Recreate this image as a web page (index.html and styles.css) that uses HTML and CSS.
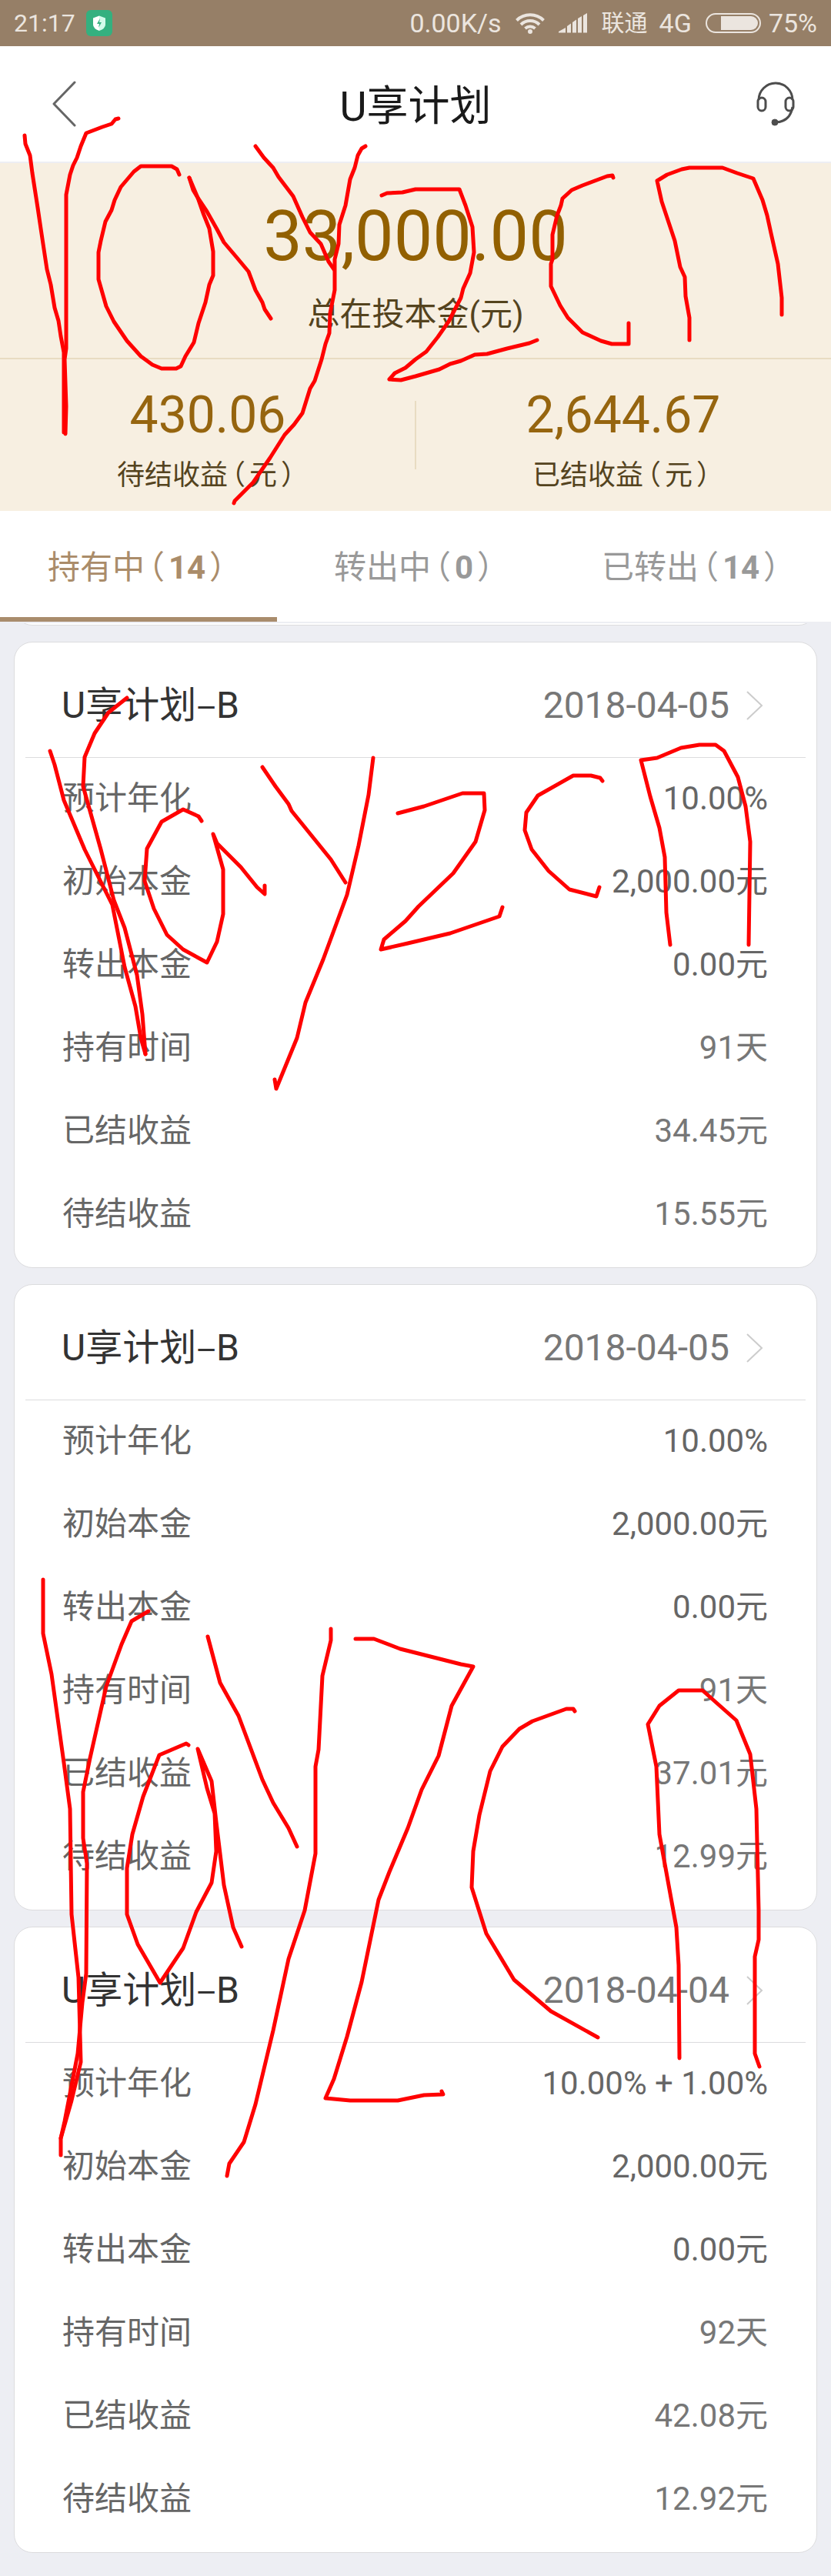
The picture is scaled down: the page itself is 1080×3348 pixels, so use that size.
FILE: index.html
```html
<!DOCTYPE html>
<html lang="zh-CN">
<head>
    <meta charset="UTF-8">
    <meta name="viewport" content="width=device-width, initial-scale=1.0">
    <title>U享计划</title>
    <link rel="stylesheet" href="styles.css">
</head>
<body>
<div class="page">

    <div class="status-bar">
        <span class="time">21:17</span>
        <svg class="guard" width="34" height="34" viewBox="0 0 34 34">
            <rect width="34" height="34" rx="6" fill="#34b07f"/>
            <path d="M17 7.500L25 10.500V19q0 5-8 8z" fill="#d3faea"/>
            <path d="M17 7.500L9 10.500V19q0 5 8 8z" fill="#fff"/>
            <path d="M18 11l-4 7h3l-1 5 4-7h-3z" fill="#34b07f"/>
        </svg>
        <span class="speed">0.00K/s</span>
        <svg class="wifi" width="38" height="28" viewBox="0 0 38 28">
            <g fill="none" stroke="#ebe5df" stroke-width="4">
                <path d="M1.500 10.500a25 25 0 0 1 35 0"/>
                <path d="M7 16a17 17 0 0 1 24 0"/>
                <path d="M12.500 21a10 10 0 0 1 13 0"/>
            </g>
            <circle cx="19" cy="25" r="3" fill="#ebe5df"/>
        </svg>
        <svg class="signal" width="38" height="26" viewBox="0 0 38 26" fill="#ebe5df">
            <path d="M0 25.500V24l9-5v6.500zM11 25.500V17l5-3.500v12zM18 25.500V12l5-3.500v17zM25 25.500V7l5-3v21.500zM32 25.500V3l5-3v25.500z"/>
        </svg>
        <span class="carrier">联通</span>
        <span class="network">4G</span>
        <svg class="battery" width="72" height="26" viewBox="0 0 72 26">
            <rect x="1" y="1" width="70" height="24" rx="12" fill="none" stroke="#ebe5df" stroke-width="2"/>
            <path d="M20 4h39a9 9 0 0 1 0 18H20z" fill="#ebe5df"/>
        </svg>
        <span>75%</span>
    </div>

    <header class="nav">
        <button class="nav-btn" aria-label="返回">
            <svg width="32" height="60" viewBox="0 0 32 60">
                <path d="M29 2L2 30l27 28" fill="none" stroke="#666" stroke-width="3" stroke-linecap="round" stroke-linejoin="round"/>
            </svg>
        </button>
        <h1>U享计划</h1>
        <button class="nav-btn" aria-label="客服">
            <svg width="50" height="58" viewBox="0 0 50 58" fill="none" stroke="#4d4d4d" stroke-width="3">
                <path d="M3 24a22 22 0 0 1 44 0"/>
                <rect x="2" y="21" width="10" height="17" rx="5"/>
                <rect x="38" y="21" width="10" height="17" rx="5"/>
                <path d="M47 33q-3 19-22 20"/>
                <circle cx="24" cy="53" r="4" fill="#4d4d4d" stroke-width="1"/>
            </svg>
        </button>
    </header>

    <section class="summary">
        <div class="total">
            <strong>33,000.00</strong>
            <p>总在投本金(元)</p>
        </div>
        <div class="profits">
            <div class="profit">
                <strong>430.06</strong>
                <p>待结收益<span class="paren">（</span>元<span class="paren">）</span></p>
            </div>
            <div class="profit">
                <strong>2,644.67</strong>
                <p>已结收益<span class="paren">（</span>元<span class="paren">）</span></p>
            </div>
        </div>
    </section>

    <nav class="tabs">
        <button class="tab active">持有中<span class="paren">（</span><b>14</b><span class="paren">）</span></button>
        <button class="tab">转出中<span class="paren">（</span><b>0</b><span class="paren">）</span></button>
        <button class="tab">已转出<span class="paren">（</span><b>14</b><span class="paren">）</span></button>
    </nav>

    <main class="list">
        <!-- bottom edge of the card scrolled under the tabs -->
        <div class="scrolled"><div class="scrolled-card"></div></div>

        <article class="card">
            <a class="card-head" href="#">
                <h2>U享计划<span class="dash">–</span>B</h2>
                <time>2018-04-05</time>
                <svg class="arrow" width="22" height="38" viewBox="0 0 22 38"><path d="M1 1l19 18L1 37"/></svg>
            </a>
            <dl>
                <div class="row"><dt>预计年化</dt><dd>10.00%</dd></div>
                <div class="row"><dt>初始本金</dt><dd>2,000.00元</dd></div>
                <div class="row"><dt>转出本金</dt><dd>0.00元</dd></div>
                <div class="row"><dt>持有时间</dt><dd class="light">91天</dd></div>
                <div class="row"><dt>已结收益</dt><dd class="light">34.45元</dd></div>
                <div class="row"><dt>待结收益</dt><dd class="light">15.55元</dd></div>
            </dl>
        </article>

        <article class="card">
            <a class="card-head" href="#">
                <h2>U享计划<span class="dash">–</span>B</h2>
                <time>2018-04-05</time>
                <svg class="arrow" width="22" height="38" viewBox="0 0 22 38"><path d="M1 1l19 18L1 37"/></svg>
            </a>
            <dl>
                <div class="row"><dt>预计年化</dt><dd>10.00%</dd></div>
                <div class="row"><dt>初始本金</dt><dd>2,000.00元</dd></div>
                <div class="row"><dt>转出本金</dt><dd>0.00元</dd></div>
                <div class="row"><dt>持有时间</dt><dd class="light">91天</dd></div>
                <div class="row"><dt>已结收益</dt><dd class="light">37.01元</dd></div>
                <div class="row"><dt>待结收益</dt><dd class="light">12.99元</dd></div>
            </dl>
        </article>

        <article class="card">
            <a class="card-head" href="#">
                <h2>U享计划<span class="dash">–</span>B</h2>
                <time>2018-04-04</time>
                <svg class="arrow" width="22" height="38" viewBox="0 0 22 38"><path d="M1 1l19 18L1 37"/></svg>
            </a>
            <dl>
                <div class="row"><dt>预计年化</dt><dd>10.00% + 1.00%</dd></div>
                <div class="row"><dt>初始本金</dt><dd>2,000.00元</dd></div>
                <div class="row"><dt>转出本金</dt><dd>0.00元</dd></div>
                <div class="row"><dt>持有时间</dt><dd class="light">92天</dd></div>
                <div class="row"><dt>已结收益</dt><dd class="light">42.08元</dd></div>
                <div class="row"><dt>待结收益</dt><dd class="light">12.92元</dd></div>
            </dl>
        </article>
    </main>

    <!-- red pen marks over the page -->
    <svg class="scribble" viewBox="0 0 1080 3348" aria-hidden="true">
        <!-- top -->
        <polyline points="32,176 33,187 39,202 42,225 49,270 53,297 56,317 61,350 66,370 71,400 76,417 79,437 83,458 83,562"/>
        <polyline points="154,154 150,155 145,161 133,165 112,173 105,190 100,205 95,215 91,227 86,253 86,453 84,467 86,528 85,564"/>
        <polyline points="233,227 230,220 223,216 183,216 174,223 157,243 149,260 145,273 137,288 131,313 128,328 128,363 138,398 148,418 165,443 183,463 198,474 210,479 229,479 235,476 241,463 252,445 258,420 267,393 272,370 277,358 277,327 272,297 264,277 257,257 246,231"/>
        <polyline points="246,231 251,247 257,257 269,275 282,298 291,315 308,335 323,353 332,377 341,393 344,402 352,414"/>
        <polyline points="332,190 343,205 355,218 362,230 381,255 393,282 403,302 417,317 427,340 434,350"/>
        <polyline points="475,190 470,193 465,202 461,218 455,233 449,267 441,292 440,317 435,337 435,377 429,407 428,433 423,447 418,467 409,495 403,505 393,537 382,552 370,565 351,595 329,627 305,651 304,654"/>
        <polyline points="496,254 503,251 523,250 540,246 597,246 605,267 614,295 616,328 611,355 602,375 599,387 583,418 569,438 554,457 540,467 527,478 513,485 506,493 521,494 540,489 571,480 585,473 599,469 617,461 633,460 659,453 688,446 698,442"/>
        <polyline points="797,231 796,228 789,229 757,241 743,247 731,258 729,267 724,280 718,305 718,337 716,343 716,372 728,397 738,413 757,432 781,443 795,447 817,447 817,420"/>
        <polyline points="896,442 896,413 891,385 890,360 884,347 877,313 866,280 860,262 854,235 867,227 886,220 896,218 939,218 958,225 979,232 991,260 997,280 1002,303 1011,343 1016,387 1016,409"/>
        <!-- middle -->
        <polyline points="65,976 71,994 83,1040 110,1104 146,1176 162,1257 176,1308 183,1349 189,1370"/>
        <polyline points="165,907 141,926 123,953 110,984 108,1022 131,1104 148,1170 162,1206 178,1267 185,1318 189,1370"/>
        <polyline points="262,1067 258,1061 238,1052 210,1068 191,1103 188,1145 200,1181 217,1215 238,1234 269,1251 282,1224 290,1188 290,1130 277,1084 282,1096 313,1127 334,1153 344,1162 344,1151"/>
        <polyline points="341,997 358,1022 375,1045 379,1054 430,1117 449,1147"/>
        <polyline points="485,985 479,1033 466,1099 451,1163 420,1247 397,1303 386,1349 359,1415 357,1403"/>
        <polyline points="517,1057 551,1048 601,1031 629,1031 630,1053 618,1094 589,1135 544,1178 527,1197 499,1221 495,1234 530,1226 585,1213 649,1191 653,1179"/>
        <polyline points="783,1015 780,1011 768,1008 745,1008 699,1034 684,1056 682,1079 691,1104 713,1132 740,1156 775,1165 779,1153"/>
        <polyline points="871,1228 866,1186 864,1114 857,1076 845,1035 833,988 854,985 885,972 909,968 930,968 941,976 959,1010 969,1048 975,1094 973,1228"/>
        <!-- bottom -->
        <polyline points="56,2053 56,2123 67,2176 83,2291 91,2351 93,2488 102,2570 105,2680 93,2730 79,2779 79,2801"/>
        <polyline points="193,2094 171,2107 158,2137 138,2192 117,2285 108,2329 108,2389 113,2422 112,2565 107,2603 101,2669 84,2757 79,2779"/>
        <polyline points="245,2268 242,2266 207,2281 186,2335 172,2384 165,2428 165,2488 179,2527 208,2577 238,2532 255,2485 275,2447 281,2406 279,2357 269,2324 257,2273 275,2315 281,2368 291,2450 303,2505 314,2530"/>
        <polyline points="270,2127 286,2187 310,2230 341,2313 355,2343 375,2376 386,2400"/>
        <polyline points="430,2117 430,2132 419,2178 414,2274 410,2296 410,2409 396,2483 375,2546 355,2639 332,2735 317,2784 298,2812 295,2828"/>
        <polyline points="462,2130 486,2130 520,2143 599,2163 615,2166 587,2217 570,2282 548,2326 530,2376 506,2433 492,2469 470,2576 451,2647 434,2702 423,2727 455,2730 517,2730 551,2723 576,2722 574,2718"/>
        <polyline points="747,2224 745,2221 736,2221 692,2237 675,2247 653,2270 637,2302 623,2359 615,2406 613,2453 632,2513 668,2573 716,2614 777,2648"/>
        <polyline points="883,2675 882,2554 879,2505 871,2461 857,2384 853,2296 846,2261 842,2241 857,2217 882,2197 913,2197 957,2236 975,2280 983,2351 986,2483 986,2521 981,2543 981,2669 987,2686"/>
    </svg>
</div>
</body>
</html>
```
FILE: styles.css
```css
*{
    margin: 0;
    padding: 0;
    box-sizing: border-box;
}
body{
    background-color: #edeef3;
    font-family: Roboto, "Noto Sans CJK SC", sans-serif;
    color: #666;
}
button{
    border: none;
    background: none;
    font-family: inherit;
    color: inherit;
}
svg{
    display: block;
    flex-shrink: 0;
}
.page{
    position: relative;
}

/* status bar */
.status-bar{
    height: 60px;
    padding: 0 18px;
    display: flex;
    align-items: center;
    background-color: #967f67;
    color: #ebe5df;
    font-size: 34px;
    line-height: 60px;
}
.time{
    font-size: 32px;
}
.guard{
    margin-left: 14px;
}
.speed{
    margin-left: auto;
}
.wifi{
    margin-left: 18px;
}
.signal{
    margin-left: 18px;
}
.carrier{
    margin-left: 18px;
    font-size: 30px;
}
.network{
    margin-left: 15px;
}
.battery{
    margin: 0 10px 0 18px;
}

/* title bar */
.nav{
    height: 152px;
    padding: 0 47px 0 68px;
    display: flex;
    align-items: center;
    justify-content: space-between;
    background-color: #fff;
    border-bottom: 2px solid #edeef3;
}
.nav-btn{
    width: 50px;
}
.nav h1{
    padding: 0 21px 4px 0;
    font-size: 54px;
    font-weight: 400;
    color: #1a1a1a;
}

/* summary */
.summary{
    background-color: #f7efe1;
    text-align: center;
    color: #54431e;
}
.summary strong{
    display: block;
    font-weight: 400;
}
.total{
    padding: 44px 0 26px;
    border-bottom: 2px solid #e8dcc2;
}
.total strong{
    font-size: 90px;
    line-height: 104px;
    color: #926000;
}
.total p{
    margin-top: 19px;
    font-size: 42px;
    line-height: 60px;
}
.profits{
    display: flex;
}
.profit{
    position: relative;
    flex: 1;
    padding: 34px 0 16px;
}
.profit + .profit::before{
    content: "";
    position: absolute;
    left: -1px;
    top: 54px;
    bottom: 54px;
    width: 2px;
    background-color: #e8dcc2;
}
.profit strong{
    font-size: 66px;
    line-height: 78px;
    color: #96650f;
}
.profit p{
    margin-top: 9px;
    font-size: 36px;
    line-height: 60px;
}
.paren{
    margin: 0 5px;
    font-feature-settings: "halt";
}

/* tabs */
.tabs{
    display: flex;
    background-color: #fff;
}
.tab{
    flex: 1;
    height: 144px;
    border-bottom: 6px solid transparent;
    font-size: 42px;
    color: #999;
}
.tab.active{
    color: #aa8c6a;
    border-bottom-color: #a98c6c;
}

/* cards */
.list{
    padding: 2px 18px 30px;
    display: flex;
    flex-direction: column;
    gap: 21px;
}
.scrolled{
    height: 3px;
    display: flex;
    align-items: flex-end;
    overflow: hidden;
}
.scrolled-card{
    flex: 1;
    height: 60px;
}
.card, .scrolled-card{
    background-color: #fff;
    border: 1px solid #dcdcde;
    border-radius: 24px;
}
.card{
    padding: 0 14px 39px;
}
.card-head{
    height: 150px;
    padding: 14px 55px 0 47px;
    display: flex;
    align-items: center;
    border-bottom: 1px solid #dcdcde;
    font-size: 48px;
    line-height: 60px;
    text-decoration: none;
    color: #777;
}
.card-head h2{
    flex: 1;
    font-size: 48px;
    font-weight: 400;
    color: #333;
}
.dash{
    font-family: "Noto Sans CJK SC", sans-serif;
    line-height: 1;
}
.arrow{
    margin-left: 22px;
    fill: none;
    stroke: #ccc;
    stroke-width: 2;
}
.card dl{
    padding: 23px 49px 0 48px;
    display: flex;
    flex-direction: column;
    gap: 48px;
}
.row{
    display: flex;
    justify-content: space-between;
    font-size: 42px;
    line-height: 60px;
}
.row .light{
    color: #777;
}

/* pen marks */
.scribble{
    position: absolute;
    top: 0;
    left: 0;
    width: 100%;
    height: 100%;
    pointer-events: none;
    fill: none;
    stroke: #f00;
    stroke-width: 5;
    stroke-linecap: round;
    stroke-linejoin: round;
}
```
